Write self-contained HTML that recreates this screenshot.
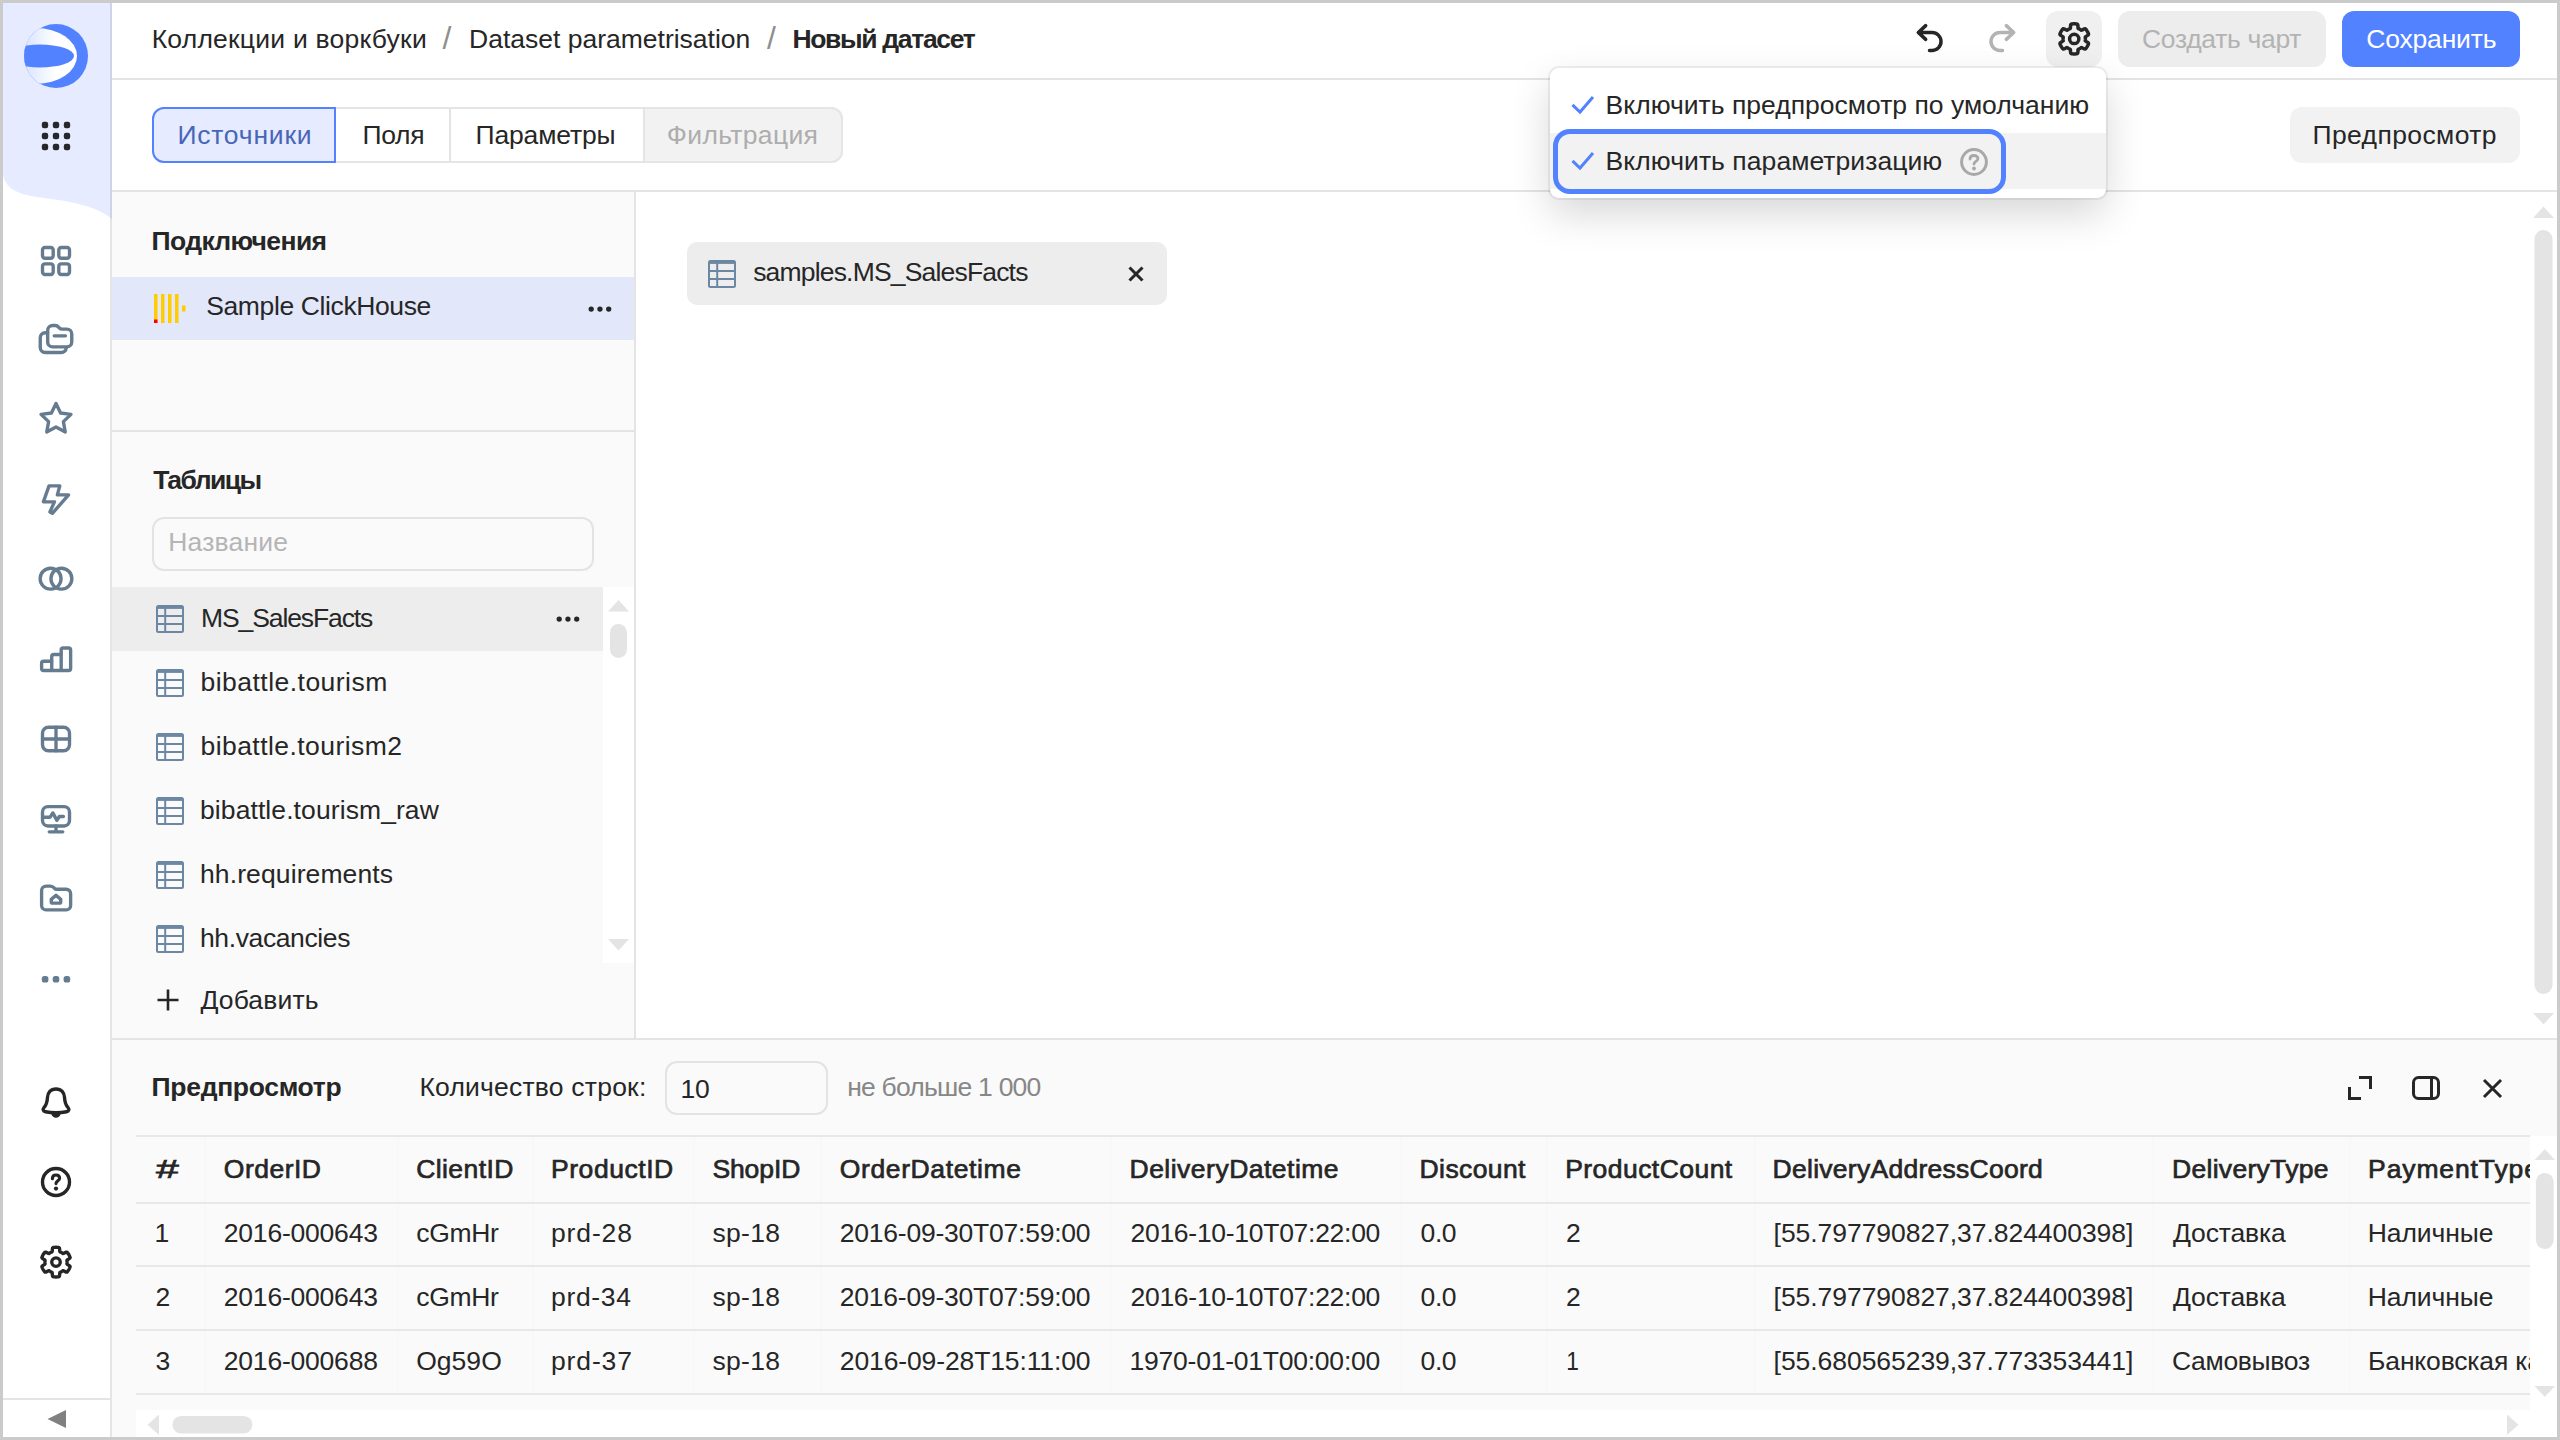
<!DOCTYPE html>
<html lang="ru">
<head>
<meta charset="utf-8">
<title>Новый датасет</title>
<style>
*{box-sizing:border-box}
html,body{margin:0;padding:0}
body{width:2560px;height:1440px;overflow:hidden;background:#fff;position:relative;font-family:"Liberation Sans",sans-serif;font-size:26px;color:#262626}
.a{position:absolute}
.t{position:absolute;white-space:pre;line-height:32px;font-size:26.5px;color:#262626}
svg{position:absolute;overflow:visible}
.frame{left:0;top:0;width:2560px;height:1440px;border:3px solid #cbcbcb;z-index:50;pointer-events:none}
.ln{background:#e4e4e4}
.btn{border-radius:12px}
.ico{fill:none;stroke:#657b8f;stroke-width:3;stroke-linecap:round;stroke-linejoin:round}
.icd{fill:none;stroke:#262626;stroke-width:3;stroke-linecap:round;stroke-linejoin:round}
.tbl rect,.tbl path{fill:none;stroke:#6b87a3;stroke-width:2}
</style>
</head>
<body>
<!-- ===== SIDEBAR ===== -->
<div class="a" id="aside" style="left:0;top:0;width:110px;height:1440px;background:#fff"></div>
<svg style="left:0;top:0" width="112" height="230" viewBox="0 0 112 230"><path d="M0 0H112V219C100 209 84 204.5 62 200.5C32 196 7 196 3 174.5V0Z" fill="#e6ebff"/></svg>
<div class="a ln" style="left:110px;top:0;width:2px;height:1440px;background:rgba(0,0,0,.1)"></div>
<div class="a ln" style="left:3px;top:1398px;width:107px;height:2px"></div>
<svg style="left:24px;top:24px" width="64" height="64" viewBox="0 0 64 64"><defs><clipPath id="lc"><circle cx="32" cy="32" r="32"/></clipPath><linearGradient id="lg" x1="0" x2="1" y1="0" y2="0"><stop offset=".33" stop-color="#d6e1ff"/><stop offset=".74" stop-color="#fff"/></linearGradient></defs><g clip-path="url(#lc)"><rect width="64" height="64" fill="#5282ff"/><ellipse cx="12" cy="32" rx="41" ry="28" fill="url(#lg)"/><ellipse cx="16" cy="32" rx="34" ry="11.5" fill="#5282ff"/></g></svg>
<svg style="left:0;top:0" width="112" height="160" viewBox="0 0 112 160"><g fill="#26272b"><rect x="41.8" y="121.8" width="6.4" height="6.4" rx="2.2"/><rect x="52.8" y="121.8" width="6.4" height="6.4" rx="2.2"/><rect x="63.8" y="121.8" width="6.4" height="6.4" rx="2.2"/><rect x="41.8" y="132.8" width="6.4" height="6.4" rx="2.2"/><rect x="52.8" y="132.8" width="6.4" height="6.4" rx="2.2"/><rect x="63.8" y="132.8" width="6.4" height="6.4" rx="2.2"/><rect x="41.8" y="143.8" width="6.4" height="6.4" rx="2.2"/><rect x="52.8" y="143.8" width="6.4" height="6.4" rx="2.2"/><rect x="63.8" y="143.8" width="6.4" height="6.4" rx="2.2"/></g></svg>
<svg style="left:38px;top:243px" width="36" height="36" viewBox="0 0 16 16"><g class="ico" style="stroke-width:1.5"><rect x="2" y="2" width="4.75" height="4.75" rx="1.1"/><rect x="9.25" y="2" width="4.75" height="4.75" rx="1.1"/><rect x="2" y="9.25" width="4.75" height="4.75" rx="1.1"/><rect x="9.25" y="9.25" width="4.75" height="4.75" rx="1.1"/></g></svg>
<svg style="left:38px;top:321px" width="36" height="36" viewBox="0 0 16 16"><g class="ico" style="stroke-width:1.5"><path d="M4.3 5.2H3.2C2 5.2 1 6.2 1 7.4V11.8C1 13 2 14 3.2 14H10.4C11.5 14 12.4 13.2 12.5 12.1"/><path d="M4.3 4.2C4.3 3 5.3 2 6.5 2H7.6C8.2 2 8.7 2.2 9.1 2.7L9.4 3C9.8 3.4 10.2 3.6 10.8 3.6H12.8C14 3.6 15 4.6 15 5.8V9.3C15 10.5 14 11.5 12.8 11.5H6.5C5.3 11.5 4.3 10.5 4.3 9.3Z"/><path d="M7.2 6.6H12.2"/></g></svg>
<svg style="left:38px;top:400px" width="36" height="36" viewBox="0 0 16 16"><g class="ico" style="stroke-width:1.5"><path d="M8.00 1.55L10.03 5.76L14.66 6.39L11.28 9.62L12.11 14.21L8.00 12.00L3.89 14.21L4.72 9.62L1.34 6.39L5.97 5.76Z"/></g></svg>
<svg style="left:38px;top:480px" width="36" height="36" viewBox="0 0 16 16"><g class="ico" style="stroke-width:1.5"><path d="M4.9 2.6H9.7L8.6 6.6H13.6L6.4 14.8L5.3 14.2L7.3 9.7H2.4Z"/></g></svg>
<svg style="left:38px;top:560px" width="36" height="36" viewBox="0 0 16 16"><g class="ico" style="stroke-width:1.5"><circle cx="5.6" cy="8.3" r="4.65"/><circle cx="10.4" cy="8.3" r="4.65"/></g></svg>
<svg style="left:38px;top:641px" width="36" height="36" viewBox="0 0 16 16"><g class="ico" style="stroke-width:1.5"><path d="M1.6 9.9C1.6 9.4 2 9 2.5 9H6.1V6.9C6.1 6.4 6.5 6 7 6H10.3V4C10.3 3.5 10.7 3.1 11.2 3.1H13.6C14.1 3.1 14.5 3.5 14.5 4V12.2C14.5 12.7 14.1 13.1 13.6 13.1H2.5C2 13.1 1.6 12.7 1.6 12.2Z"/><path d="M6.1 9V13M10.3 6V13"/></g></svg>
<svg style="left:38px;top:721px" width="36" height="36" viewBox="0 0 16 16"><g class="ico" style="stroke-width:1.5"><rect x="2" y="2.8" width="12" height="10.4" rx="2.6"/><path d="M8 2.8V13.2M2 8H14"/></g></svg>
<svg style="left:38px;top:801px" width="36" height="36" viewBox="0 0 16 16"><g class="ico" style="stroke-width:1.5"><rect x="2" y="2.5" width="12" height="8.6" rx="2.4"/><path d="M8 11.1V13.6M5 13.7H11M2.2 7.2H5.4L6.6 5.3L8.4 8.6L9.5 6.9H11.3"/></g></svg>
<svg style="left:38px;top:880px" width="36" height="36" viewBox="0 0 16 16"><g class="ico" style="stroke-width:1.5"><path d="M1.6 4.7C1.6 3.6 2.5 2.7 3.6 2.7H5.4C6 2.7 6.5 2.9 6.9 3.3L7.4 3.8C7.6 4 7.9 4.1 8.2 4.1H12.5C13.6 4.1 14.5 5 14.5 6.1V11.3C14.5 12.4 13.6 13.3 12.5 13.3H3.6C2.5 13.3 1.6 12.4 1.6 11.3Z"/><path d="M5.9 8.6L8 6.8L10.1 8.6V9.8C10.1 10.1 9.9 10.3 9.6 10.3H6.4C6.1 10.3 5.9 10.1 5.9 9.8Z"/></g></svg>
<svg style="left:38px;top:970px" width="36" height="18" viewBox="0 0 36 18"><g fill="#657b8f"><rect x="3.8" y="5.9" width="6.6" height="6.6" rx="2.6"/><rect x="14.7" y="5.9" width="6.6" height="6.6" rx="2.6"/><rect x="25.6" y="5.9" width="6.6" height="6.6" rx="2.6"/></g></svg>
<svg style="left:38px;top:1085px" width="36" height="36" viewBox="0 0 16 16"><g class="icd" style="stroke-width:1.5"><path d="M8 1.75C5.6 1.75 4.3 3.5 4.2 5.6C4.1 7.9 3.6 9 2.6 10.1C2 10.8 2.3 11.7 3.3 11.9C6.4 12.5 9.6 12.5 12.7 11.9C13.7 11.7 14 10.8 13.4 10.1C12.4 9 11.9 7.9 11.8 5.6C11.7 3.5 10.4 1.75 8 1.75Z"/><path d="M6.6 12.6C6.9 13.4 7.4 13.8 8 13.8C8.6 13.8 9.1 13.4 9.4 12.6Z" style="fill:#262626"/></g></svg>
<svg style="left:38px;top:1164px" width="36" height="36" viewBox="0 0 16 16"><g class="icd" style="stroke-width:1.5"><circle cx="8" cy="8" r="6"/><path d="M6.4 6.5C6.4 5.4 7.1 4.9 8 4.9C8.9 4.9 9.6 5.4 9.6 6.3C9.6 7.4 8 7.5 8 8.7" style="stroke-width:1.4"/><circle cx="8" cy="10.9" r=".95" style="fill:#262626;stroke:none"/></g></svg>
<svg style="left:38px;top:1244px" width="36" height="36" viewBox="0 0 16 16"><g class="icd" style="stroke-width:1.5"><path d="M12.90 8.05L12.90 7.88L12.89 7.71L12.87 7.54L12.85 7.37L12.88 7.19L13.22 6.94L13.72 6.62L14.14 6.29L14.28 6.01L14.20 5.79L14.12 5.58L14.03 5.37L13.93 5.16L13.83 4.95L13.72 4.75L13.60 4.55L13.47 4.36L13.34 4.17L13.20 3.99L13.06 3.81L12.90 3.63L12.59 3.61L12.09 3.81L11.57 4.08L11.19 4.25L11.02 4.19L10.88 4.09L10.74 3.99L10.60 3.89L10.45 3.81L10.30 3.72L10.15 3.65L9.99 3.57L9.84 3.51L9.70 3.39L9.65 2.97L9.62 2.39L9.54 1.85L9.37 1.59L9.15 1.55L8.92 1.51L8.69 1.49L8.46 1.47L8.23 1.45L8.00 1.45L7.77 1.45L7.54 1.47L7.31 1.49L7.08 1.51L6.85 1.55L6.63 1.59L6.46 1.85L6.38 2.39L6.35 2.97L6.30 3.39L6.16 3.51L6.01 3.57L5.85 3.65L5.70 3.72L5.55 3.81L5.40 3.89L5.26 3.99L5.12 4.09L4.98 4.19L4.81 4.25L4.43 4.08L3.91 3.81L3.41 3.61L3.10 3.63L2.94 3.81L2.80 3.99L2.66 4.17L2.53 4.36L2.40 4.55L2.28 4.75L2.17 4.95L2.07 5.16L1.97 5.37L1.88 5.58L1.80 5.79L1.72 6.01L1.86 6.29L2.28 6.62L2.78 6.94L3.12 7.19L3.15 7.37L3.13 7.54L3.11 7.71L3.10 7.88L3.10 8.05L3.10 8.22L3.11 8.39L3.13 8.56L3.15 8.73L3.12 8.91L2.78 9.16L2.28 9.48L1.86 9.81L1.72 10.09L1.80 10.31L1.88 10.52L1.97 10.73L2.07 10.94L2.17 11.15L2.28 11.35L2.40 11.55L2.53 11.74L2.66 11.93L2.80 12.11L2.94 12.29L3.10 12.47L3.41 12.49L3.91 12.29L4.43 12.02L4.81 11.85L4.98 11.91L5.12 12.01L5.26 12.11L5.40 12.21L5.55 12.29L5.70 12.38L5.85 12.45L6.01 12.53L6.16 12.59L6.30 12.71L6.35 13.13L6.38 13.71L6.46 14.25L6.63 14.51L6.85 14.55L7.08 14.59L7.31 14.61L7.54 14.63L7.77 14.65L8.00 14.65L8.23 14.65L8.46 14.63L8.69 14.61L8.92 14.59L9.15 14.55L9.37 14.51L9.54 14.25L9.62 13.71L9.65 13.13L9.70 12.71L9.84 12.59L9.99 12.53L10.15 12.45L10.30 12.38L10.45 12.29L10.60 12.21L10.74 12.11L10.88 12.01L11.02 11.91L11.19 11.85L11.57 12.02L12.09 12.29L12.59 12.49L12.90 12.47L13.06 12.29L13.20 12.11L13.34 11.93L13.47 11.74L13.60 11.55L13.72 11.35L13.83 11.15L13.93 10.94L14.03 10.73L14.12 10.52L14.20 10.31L14.28 10.09L14.14 9.81L13.72 9.48L13.22 9.16L12.88 8.91L12.85 8.73L12.87 8.56L12.89 8.39L12.90 8.22Z"/><circle cx="8" cy="8.05" r="1.9"/></g></svg>
<svg style="left:47px;top:1409px" width="20" height="20" viewBox="0 0 20 20"><path d="M0.5 10L19 1V19Z" fill="#808080"/></svg>

<!-- ===== HEADER ===== -->
<div class="a ln" style="left:112px;top:78px;width:2448px;height:2px"></div>
<span class="t" style="left:151.7px;top:22.7px;letter-spacing:0.22px">Коллекции и воркбуки</span>
<span class="t" style="left:442.5px;top:21.6px;font-size:32px;color:#8f8f8f">/</span>
<span class="t" style="left:469.0px;top:22.7px">Dataset parametrisation</span>
<span class="t" style="left:767.1px;top:21.6px;font-size:32px;color:#8f8f8f">/</span>
<span class="t" style="left:792.4px;top:22.7px;font-weight:700;letter-spacing:-1.32px">Новый датасет</span>
<div class="a btn" style="left:2046px;top:11px;width:56px;height:56px;background:#f0f0f0"></div>
<div class="a btn" style="left:2118px;top:11px;width:208px;height:56px;background:#ededed"></div>
<span class="t" style="left:2142.0px;top:22.7px;color:#b3b3b3;letter-spacing:-0.31px">Создать чарт</span>
<div class="a btn" style="left:2342px;top:11px;width:178px;height:56px;background:#5282ff"></div>
<span class="t" style="left:2366.2px;top:22.7px;color:#fff;letter-spacing:-0.17px">Сохранить</span>
<svg style="left:1900px;top:11px" width="60" height="56" viewBox="0 0 60 56"><path class="icd" style="stroke-width:3.5" d="M25.7 14.6L18.3 21.5L25.7 28.4M19 21.5H32A9 9 0 0 1 32 39.5H29.5"/></svg>
<svg style="left:1972px;top:11px" width="60" height="56" viewBox="0 0 60 56"><path class="icd" style="stroke-width:3.5;stroke:#b3b3b3" d="M34.3 14.6L41.7 21.5L34.3 28.4M41 21.5H28A9 9 0 0 0 28 39.5H30.5"/></svg>
<svg style="left:2056px;top:21px" width="36" height="36" viewBox="0 0 16 16"><g class="icd" style="stroke-width:1.55"><path d="M13.05 7.95L13.05 7.78L13.04 7.60L13.02 7.43L13.00 7.26L13.03 7.08L13.39 6.83L13.89 6.51L14.33 6.16L14.47 5.88L14.40 5.66L14.31 5.44L14.22 5.22L14.12 5.01L14.02 4.80L13.90 4.60L13.78 4.40L13.65 4.20L13.52 4.01L13.38 3.83L13.23 3.64L13.08 3.47L12.76 3.45L12.25 3.66L11.72 3.93L11.32 4.11L11.15 4.05L11.01 3.95L10.87 3.85L10.72 3.75L10.57 3.66L10.42 3.58L10.27 3.50L10.11 3.43L9.95 3.36L9.81 3.24L9.77 2.81L9.75 2.21L9.67 1.66L9.49 1.40L9.26 1.35L9.03 1.32L8.80 1.29L8.57 1.27L8.33 1.25L8.10 1.25L7.87 1.25L7.63 1.27L7.40 1.29L7.17 1.32L6.94 1.35L6.71 1.40L6.53 1.66L6.45 2.21L6.43 2.81L6.39 3.24L6.25 3.36L6.09 3.43L5.93 3.50L5.78 3.58L5.62 3.66L5.48 3.75L5.33 3.85L5.19 3.95L5.05 4.05L4.88 4.11L4.48 3.93L3.95 3.66L3.44 3.45L3.12 3.47L2.97 3.64L2.82 3.83L2.68 4.01L2.55 4.20L2.42 4.40L2.30 4.60L2.18 4.80L2.08 5.01L1.98 5.22L1.89 5.44L1.80 5.66L1.73 5.88L1.87 6.16L2.31 6.51L2.81 6.83L3.17 7.08L3.20 7.26L3.18 7.43L3.16 7.60L3.15 7.78L3.15 7.95L3.15 8.12L3.16 8.30L3.18 8.47L3.20 8.64L3.17 8.82L2.81 9.07L2.31 9.39L1.87 9.74L1.73 10.02L1.80 10.24L1.89 10.46L1.98 10.68L2.08 10.89L2.18 11.10L2.30 11.30L2.42 11.50L2.55 11.70L2.68 11.89L2.82 12.07L2.97 12.26L3.12 12.43L3.44 12.45L3.95 12.24L4.48 11.97L4.88 11.79L5.05 11.85L5.19 11.95L5.33 12.05L5.48 12.15L5.62 12.24L5.78 12.32L5.93 12.40L6.09 12.47L6.25 12.54L6.39 12.66L6.43 13.09L6.45 13.69L6.53 14.24L6.71 14.50L6.94 14.55L7.17 14.58L7.40 14.61L7.63 14.63L7.87 14.65L8.10 14.65L8.33 14.65L8.57 14.63L8.80 14.61L9.03 14.58L9.26 14.55L9.49 14.50L9.67 14.24L9.75 13.69L9.77 13.09L9.81 12.66L9.95 12.54L10.11 12.47L10.27 12.40L10.42 12.32L10.57 12.24L10.72 12.15L10.87 12.05L11.01 11.95L11.15 11.85L11.32 11.79L11.72 11.97L12.25 12.24L12.76 12.45L13.08 12.43L13.23 12.26L13.38 12.07L13.52 11.89L13.65 11.70L13.78 11.50L13.90 11.30L14.02 11.10L14.12 10.89L14.22 10.68L14.31 10.46L14.40 10.24L14.47 10.02L14.33 9.74L13.89 9.39L13.39 9.07L13.03 8.82L13.00 8.64L13.02 8.47L13.04 8.30L13.05 8.12Z"/><circle cx="8.1" cy="7.95" r="2.05"/></g></svg>

<!-- ===== TAB BAR ===== -->
<div class="a ln" style="left:112px;top:190px;width:2448px;height:2px"></div>
<div class="a" style="left:152px;top:107px;width:691px;height:56px;border:2px solid #e5e5e5;border-radius:12px"></div>
<div class="a" style="left:643px;top:107px;width:200px;height:56px;background:#f2f2f2;border:2px solid #e5e5e5;border-radius:0 12px 12px 0"></div>
<div class="a ln" style="left:449px;top:107px;width:2px;height:56px"></div>
<div class="a" style="left:152px;top:107px;width:184px;height:56px;background:#e6ebff;border:2px solid #5282ff;border-radius:12px 0 0 12px"></div>
<span class="t" style="left:177.4px;top:119.0px;color:#4766b8;letter-spacing:0.78px">Источники</span>
<span class="t" style="left:362.6px;top:119.0px;letter-spacing:-0.37px">Поля</span>
<span class="t" style="left:475.5px;top:119.0px;letter-spacing:-0.14px">Параметры</span>
<span class="t" style="left:666.8px;top:119.0px;color:#adadad;letter-spacing:0.34px">Фильтрация</span>
<div class="a btn" style="left:2290px;top:107px;width:230px;height:56px;background:#f2f2f2"></div>
<span class="t" style="left:2312.5px;top:119.0px;letter-spacing:0.39px">Предпросмотр</span>

<!-- ===== LEFT PANEL ===== -->
<div class="a" style="left:112px;top:192px;width:522px;height:846px;background:#fafafa"></div>
<div class="a ln" style="left:634px;top:192px;width:2px;height:846px"></div>
<span class="t" style="left:151.5px;top:224.6px;font-weight:700;letter-spacing:-0.61px">Подключения</span>
<div class="a" style="left:112px;top:277px;width:522px;height:63px;background:#e3e7fa"></div>
<svg style="left:154px;top:294px" width="32" height="30" viewBox="0 0 32 30"><g fill="#fc0"><rect x="0" y="0" width="3.5" height="29"/><rect x="7" y="0" width="3.5" height="29"/><rect x="14" y="0" width="3.5" height="29"/><rect x="21" y="0" width="3.5" height="29"/><rect x="28" y="11.5" width="3.5" height="6"/></g><rect x="0" y="25.5" width="3.5" height="3.5" fill="#f00"/></svg>
<span class="t" style="left:206.2px;top:289.5px;letter-spacing:-0.38px">Sample ClickHouse</span>
<svg style="left:587.6px;top:305.7px" width="24" height="6" viewBox="0 0 24 6"><g fill="#262626"><circle cx="3.2" cy="3.1" r="2.65"/><circle cx="11.95" cy="3.1" r="2.65"/><circle cx="20.7" cy="3.1" r="2.65"/></g></svg>
<div class="a ln" style="left:112px;top:430px;width:522px;height:2px"></div>
<span class="t" style="left:153.3px;top:464.4px;font-weight:700;letter-spacing:-1.53px">Таблицы</span>
<div class="a" style="left:152px;top:517px;width:442px;height:54px;border:2px solid #e3e3e3;border-radius:12px"></div>
<span class="t" style="left:168.3px;top:526.3px;color:#b5b5b5;letter-spacing:0.17px">Название</span>
<div class="a" style="left:112px;top:587px;width:491px;height:64px;background:#ededed"></div>
<svg class="tbl" style="left:155.5px;top:605px" width="28" height="28" viewBox="0 0 28 28"><rect x="1" y="1" width="26" height="26" rx="1.5"/><path d="M1 2.4H27" style="stroke-width:3"/><path d="M1 11H27M1 19H27M9.2 3V27"/></svg>
<span class="t" style="left:201.0px;top:601.6px;letter-spacing:-1.10px">MS_SalesFacts</span>
<svg class="tbl" style="left:155.5px;top:669px" width="28" height="28" viewBox="0 0 28 28"><rect x="1" y="1" width="26" height="26" rx="1.5"/><path d="M1 2.4H27" style="stroke-width:3"/><path d="M1 11H27M1 19H27M9.2 3V27"/></svg>
<span class="t" style="left:200.5px;top:665.5px;letter-spacing:0.47px">bibattle.tourism</span>
<svg class="tbl" style="left:155.5px;top:733px" width="28" height="28" viewBox="0 0 28 28"><rect x="1" y="1" width="26" height="26" rx="1.5"/><path d="M1 2.4H27" style="stroke-width:3"/><path d="M1 11H27M1 19H27M9.2 3V27"/></svg>
<span class="t" style="left:200.5px;top:729.5px;letter-spacing:0.44px">bibattle.tourism2</span>
<svg class="tbl" style="left:155.5px;top:797px" width="28" height="28" viewBox="0 0 28 28"><rect x="1" y="1" width="26" height="26" rx="1.5"/><path d="M1 2.4H27" style="stroke-width:3"/><path d="M1 11H27M1 19H27M9.2 3V27"/></svg>
<span class="t" style="left:200.0px;top:793.6px;letter-spacing:0.09px">bibattle.tourism_raw</span>
<svg class="tbl" style="left:155.5px;top:861px" width="28" height="28" viewBox="0 0 28 28"><rect x="1" y="1" width="26" height="26" rx="1.5"/><path d="M1 2.4H27" style="stroke-width:3"/><path d="M1 11H27M1 19H27M9.2 3V27"/></svg>
<span class="t" style="left:200.0px;top:857.6px;letter-spacing:0.11px">hh.requirements</span>
<svg class="tbl" style="left:155.5px;top:925px" width="28" height="28" viewBox="0 0 28 28"><rect x="1" y="1" width="26" height="26" rx="1.5"/><path d="M1 2.4H27" style="stroke-width:3"/><path d="M1 11H27M1 19H27M9.2 3V27"/></svg>
<span class="t" style="left:200.0px;top:921.6px;letter-spacing:-0.39px">hh.vacancies</span>
<svg style="left:555.7px;top:616px" width="24" height="6" viewBox="0 0 24 6"><g fill="#262626"><circle cx="3.2" cy="3.1" r="2.65"/><circle cx="11.95" cy="3.1" r="2.65"/><circle cx="20.7" cy="3.1" r="2.65"/></g></svg>
<div class="a" style="left:603px;top:587px;width:31px;height:376px;background:#fff"></div>
<svg style="left:603px;top:587px" width="31" height="376" viewBox="0 0 31 376"><g fill="#e4e4e4"><path d="M5 24.5L15.5 13L26 24.5Z"/><path d="M5 352L15.5 363.5L26 352Z"/><rect x="7" y="37" width="17" height="34" rx="8.5"/></g></svg>
<svg style="left:157px;top:989px" width="22" height="22" viewBox="0 0 22 22"><path d="M11 0.5V21.5M0.5 11H21.5" stroke="#262626" stroke-width="2.6" fill="none"/></svg>
<span class="t" style="left:200.4px;top:983.8px;letter-spacing:0.14px">Добавить</span>

<!-- ===== MAIN ===== -->
<div class="a" style="left:687px;top:242px;width:480px;height:63px;background:#ededed;border-radius:10px"></div>
<svg class="tbl" style="left:708px;top:260px" width="28" height="28" viewBox="0 0 28 28"><rect x="1" y="1" width="26" height="26" rx="1.5"/><path d="M1 2.4H27" style="stroke-width:3"/><path d="M1 11H27M1 19H27M9.2 3V27"/></svg>
<span class="t" style="left:753.2px;top:255.8px;letter-spacing:-0.82px">samples.MS_SalesFacts</span>
<svg style="left:1128px;top:266px" width="16" height="16" viewBox="0 0 16 16"><path d="M1.5 1.5L14.5 14.5M14.5 1.5L1.5 14.5" stroke="#262626" stroke-width="3" fill="none"/></svg>
<svg style="left:2530px;top:192px" width="27" height="846" viewBox="0 0 27 846"><g fill="#e4e4e4"><path d="M3 26L13.5 14.5L24 26Z"/><path d="M3 821L13.5 832.5L24 821Z"/><rect x="4.5" y="38" width="18" height="764" rx="9"/></g></svg>

<!-- ===== PREVIEW ===== -->
<div class="a" style="left:112px;top:1040px;width:2445px;height:397px;background:#fafafa"></div>
<div class="a ln" style="left:112px;top:1038px;width:2448px;height:2px"></div>
<span class="t" style="left:151.6px;top:1070.8px;font-weight:700;letter-spacing:-0.31px">Предпросмотр</span>
<span class="t" style="left:419.4px;top:1071.0px;letter-spacing:0.21px">Количество строк:</span>
<div class="a" style="left:665px;top:1061px;width:163px;height:54px;border:2px solid #e3e3e3;border-radius:12px"></div>
<span class="t" style="left:680.6px;top:1072.5px;letter-spacing:-0.40px">10</span>
<span class="t" style="left:847.2px;top:1071.0px;color:#878787;letter-spacing:-0.78px">не больше 1 000</span>
<svg style="left:2348px;top:1076px" width="24" height="24" viewBox="0 0 24 24"><path class="icd" style="stroke-linecap:butt;stroke-linejoin:miter" d="M11 1.5H22.5V13M1.5 11V22.5H13"/></svg>
<svg style="left:2412px;top:1076px" width="28" height="24" viewBox="0 0 28 24"><rect class="icd" x="1.5" y="1.5" width="25" height="21" rx="5"/><path class="icd" d="M19.5 1.5V22.5"/></svg>
<svg style="left:2483px;top:1079px" width="19" height="19" viewBox="0 0 19 19"><path class="icd" style="stroke-linecap:butt" d="M1 1L18 18M18 1L1 18"/></svg>
<div class="a" style="left:204px;top:1138px;width:2px;height:255px;background:#f8f8f8"></div><div class="a" style="left:397px;top:1138px;width:2px;height:255px;background:#f8f8f8"></div><div class="a" style="left:532px;top:1138px;width:2px;height:255px;background:#f8f8f8"></div><div class="a" style="left:693px;top:1138px;width:2px;height:255px;background:#f8f8f8"></div><div class="a" style="left:820px;top:1138px;width:2px;height:255px;background:#f8f8f8"></div><div class="a" style="left:1110px;top:1138px;width:2px;height:255px;background:#f8f8f8"></div><div class="a" style="left:1400px;top:1138px;width:2px;height:255px;background:#f8f8f8"></div><div class="a" style="left:1546px;top:1138px;width:2px;height:255px;background:#f8f8f8"></div><div class="a" style="left:1754px;top:1138px;width:2px;height:255px;background:#f8f8f8"></div><div class="a" style="left:2152px;top:1138px;width:2px;height:255px;background:#f8f8f8"></div><div class="a" style="left:2349px;top:1138px;width:2px;height:255px;background:#f8f8f8"></div>
<div class="a" style="left:136px;top:1135px;width:2394px;height:2px;background:#e8e8e8"></div>
<div class="a" style="left:136px;top:1202px;width:2394px;height:2px;background:#e8e8e8"></div>
<div class="a" style="left:136px;top:1265px;width:2394px;height:2px;background:#e8e8e8"></div>
<div class="a" style="left:136px;top:1329px;width:2394px;height:2px;background:#e8e8e8"></div>
<div class="a" style="left:136px;top:1393px;width:2394px;height:2px;background:#e8e8e8"></div>
<span class="t" style="left:155.6px;top:1152.5px;font-weight:400;-webkit-text-stroke:.7px currentColor;transform-origin:0.0px 50%;transform:scaleX(1.547)">#</span>
<span class="t" style="left:223.8px;top:1152.5px;font-weight:400;-webkit-text-stroke:.7px currentColor;letter-spacing:0.48px">OrderID</span>
<span class="t" style="left:416.2px;top:1152.5px;font-weight:400;-webkit-text-stroke:.7px currentColor;letter-spacing:0.41px">ClientID</span>
<span class="t" style="left:551.0px;top:1152.5px;font-weight:400;-webkit-text-stroke:.7px currentColor;letter-spacing:0.55px">ProductID</span>
<span class="t" style="left:712.4px;top:1152.5px;font-weight:400;-webkit-text-stroke:.7px currentColor;letter-spacing:-0.10px">ShopID</span>
<span class="t" style="left:839.8px;top:1152.5px;font-weight:400;-webkit-text-stroke:.7px currentColor;letter-spacing:0.61px">OrderDatetime</span>
<span class="t" style="left:1129.5px;top:1152.5px;font-weight:400;-webkit-text-stroke:.7px currentColor;letter-spacing:0.49px">DeliveryDatetime</span>
<span class="t" style="left:1419.6px;top:1152.5px;font-weight:400;-webkit-text-stroke:.7px currentColor;letter-spacing:0.39px">Discount</span>
<span class="t" style="left:1565.2px;top:1152.5px;font-weight:400;-webkit-text-stroke:.7px currentColor;letter-spacing:0.45px">ProductCount</span>
<span class="t" style="left:1772.6px;top:1152.5px;font-weight:400;-webkit-text-stroke:.7px currentColor;letter-spacing:0.27px">DeliveryAddressCoord</span>
<span class="t" style="left:2172.0px;top:1152.5px;font-weight:400;-webkit-text-stroke:.7px currentColor;letter-spacing:0.30px">DeliveryType</span>
<span class="t" style="left:2368.1px;top:1152.5px;font-weight:400;-webkit-text-stroke:.7px currentColor;letter-spacing:0.88px">PaymentType</span>
<span class="t" style="left:154.4px;top:1216.6px">1</span>
<span class="t" style="left:223.8px;top:1216.6px;letter-spacing:-0.21px">2016-000643</span>
<span class="t" style="left:416.2px;top:1216.6px;letter-spacing:-0.30px">cGmHr</span>
<span class="t" style="left:551.0px;top:1216.6px;letter-spacing:0.86px">prd-28</span>
<span class="t" style="left:712.4px;top:1216.6px;letter-spacing:0.35px">sp-18</span>
<span class="t" style="left:839.8px;top:1216.6px;letter-spacing:-0.23px">2016-09-30T07:59:00</span>
<span class="t" style="left:1130.5px;top:1216.6px;letter-spacing:-0.28px">2016-10-10T07:22:00</span>
<span class="t" style="left:1420.6px;top:1216.6px;letter-spacing:-0.45px">0.0</span>
<span class="t" style="left:1565.9px;top:1216.6px">2</span>
<span class="t" style="left:1773.6px;top:1216.6px;letter-spacing:-0.05px">[55.797790827,37.824400398]</span>
<span class="t" style="left:2173.0px;top:1216.6px;letter-spacing:-0.14px">Доставка</span>
<span class="t" style="left:2367.8px;top:1216.6px;letter-spacing:-0.11px">Наличные</span>
<span class="t" style="left:155.4px;top:1280.6px">2</span>
<span class="t" style="left:223.8px;top:1280.6px;letter-spacing:-0.21px">2016-000643</span>
<span class="t" style="left:416.2px;top:1280.6px;letter-spacing:-0.30px">cGmHr</span>
<span class="t" style="left:551.0px;top:1280.6px;letter-spacing:0.66px">prd-34</span>
<span class="t" style="left:712.4px;top:1280.6px;letter-spacing:0.35px">sp-18</span>
<span class="t" style="left:839.8px;top:1280.6px;letter-spacing:-0.23px">2016-09-30T07:59:00</span>
<span class="t" style="left:1130.5px;top:1280.6px;letter-spacing:-0.28px">2016-10-10T07:22:00</span>
<span class="t" style="left:1420.6px;top:1280.6px;letter-spacing:-0.45px">0.0</span>
<span class="t" style="left:1565.9px;top:1280.6px">2</span>
<span class="t" style="left:1773.6px;top:1280.6px;letter-spacing:-0.05px">[55.797790827,37.824400398]</span>
<span class="t" style="left:2173.0px;top:1280.6px;letter-spacing:-0.14px">Доставка</span>
<span class="t" style="left:2367.8px;top:1280.6px;letter-spacing:-0.11px">Наличные</span>
<span class="t" style="left:155.4px;top:1344.5px">3</span>
<span class="t" style="left:223.8px;top:1344.5px;letter-spacing:-0.21px">2016-000688</span>
<span class="t" style="left:416.2px;top:1344.5px;letter-spacing:0.03px">Og59O</span>
<span class="t" style="left:551.0px;top:1344.5px;letter-spacing:0.86px">prd-37</span>
<span class="t" style="left:712.4px;top:1344.5px;letter-spacing:0.35px">sp-18</span>
<span class="t" style="left:839.8px;top:1344.5px;letter-spacing:-0.12px">2016-09-28T15:11:00</span>
<span class="t" style="left:1129.5px;top:1344.5px;letter-spacing:-0.23px">1970-01-01T00:00:00</span>
<span class="t" style="left:1420.6px;top:1344.5px;letter-spacing:-0.45px">0.0</span>
<span class="t" style="left:1565.8px;top:1344.5px;transform-origin:2.0px 50%;transform:scaleX(0.858)">1</span>
<span class="t" style="left:1773.6px;top:1344.5px;letter-spacing:-0.05px">[55.680565239,37.773353441]</span>
<span class="t" style="left:2172.0px;top:1344.5px;letter-spacing:-0.32px">Самовывоз</span>
<span class="t" style="left:2368.1px;top:1344.5px;letter-spacing:-0.17px">Банковская карта</span>
<div class="a" style="left:2530px;top:1136px;width:27px;height:301px;background:#fff"></div>
<div class="a" style="left:136px;top:1410px;width:2421px;height:27px;background:#fff"></div>
<svg style="left:2530px;top:1136px" width="27" height="274" viewBox="0 0 27 274"><g fill="#e4e4e4"><path d="M4.5 24L14.8 13L25 24Z"/><path d="M4.5 250L14.8 261L25 250Z"/><rect x="5.9" y="37" width="17.8" height="76" rx="8.9"/></g></svg>
<svg style="left:136px;top:1410px" width="2394" height="27" viewBox="0 0 2394 27"><g fill="#e4e4e4"><path d="M23 4.5L11.5 14.7L23 25Z"/><path d="M2371 4.5L2382.5 14.7L2371 25Z"/><rect x="36.4" y="6" width="80" height="17.5" rx="8.75"/></g></svg>

<!-- ===== DROPDOWN ===== -->
<div class="a" style="left:1550px;top:68px;width:556px;height:130px;background:#fff;border-radius:9px;box-shadow:0 0 0 2px rgba(0,0,0,.06),0 16px 40px rgba(0,0,0,.16)"></div>
<div class="a" style="left:1550px;top:133px;width:556px;height:56px;background:#f2f2f2"></div>
<div class="a" style="left:1553px;top:129px;width:453px;height:65px;border:5px solid #5282ff;border-radius:17px"></div>
<svg style="left:1571px;top:95px" width="24" height="18" viewBox="0 0 24 18"><path d="M1.5 9.8L9 17L22 2" stroke="#5282ff" stroke-width="3" fill="none"/></svg>
<svg style="left:1571px;top:151px" width="24" height="18" viewBox="0 0 24 18"><path d="M1.5 9.8L9 17L22 2" stroke="#5282ff" stroke-width="3" fill="none"/></svg>
<span class="t" style="left:1605.6px;top:88.7px;letter-spacing:0.01px">Включить предпросмотр по умолчанию</span>
<span class="t" style="left:1605.6px;top:144.8px;letter-spacing:0.06px">Включить параметризацию</span>
<svg style="left:1959px;top:147px" width="30" height="30" viewBox="0 0 30 30"><circle cx="15" cy="15" r="12.4" fill="none" stroke="#a8a8a8" stroke-width="3"/><path d="M11 12C11 9.5 12.8 8.5 15 8.5C17.2 8.5 19 9.8 19 11.8C19 14 15 14.3 15 17" fill="none" stroke="#a8a8a8" stroke-width="2.8" stroke-linecap="round"/><circle cx="15" cy="21.5" r="1.9" fill="#a8a8a8"/></svg>

<div class="a frame"></div>
</body>
</html>
